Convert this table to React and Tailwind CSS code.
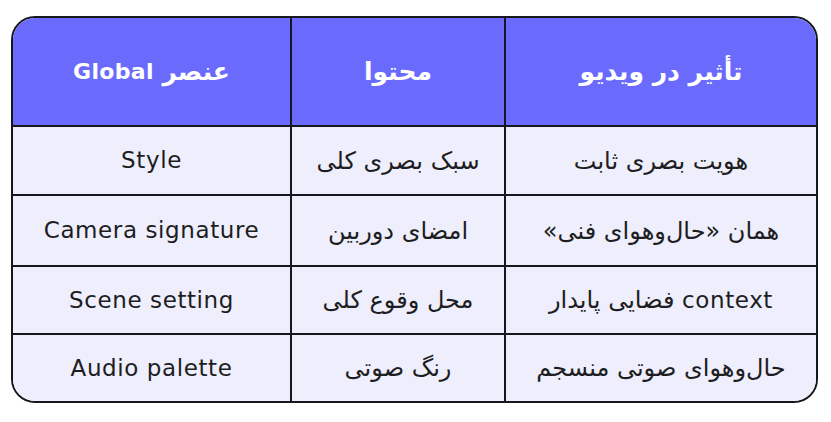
const font = "font-['DejaVu_Sans',sans-serif]";

const headers = ["عنصر Global", "محتوا", "تأثیر در ویدیو"];

const rows = [
  ["Style", "سبک بصری کلی", "هویت بصری ثابت"],
  ["Camera signature", "امضای دوربین", "همان «حال\u200cوهوای فنی»"],
  ["Scene setting", "محل وقوع کلی", "context فضایی پایدار"],
  ["Audio palette", "رنگ صوتی", "حال\u200cوهوای صوتی منسجم"],
];

const rowHeights = ["h-[69px]", "h-[71px]", "h-[68px]", "h-[66px]"];

// latin words get their own size and a little tracking, persian runs stay untouched
const Mixed = ({ text, header }) =>
  text.split(/([A-Za-z]+(?: [A-Za-z]+)*)/).map((part, i) =>
    /[A-Za-z]/.test(part) ? (
      <span
        key={i}
        dir="ltr"
        className={header ? "text-[22px] tracking-[0.3px]" : "text-[23px] tracking-[0.6px]"}
      >
        {part}
      </span>
    ) : (
      <span key={i}>{part}</span>
    )
  );

const Cell = ({ text, last, header, lastRow }) => (
  <div
    dir="rtl"
    className={`flex items-center justify-center whitespace-pre ${last ? "" : "border-r-2 border-[#16161d]"} ${
      lastRow ? "" : "border-b-2 border-[#16161d]"
    } ${
      header
        ? "bg-[#6a6bfd] text-white text-[25px] font-bold"
        : "bg-[#eeeefc] text-[#1d1d22] text-[24px]"
    }`}
  >
    <Mixed text={text} header={header} />
  </div>
);

export default function App() {
  return (
    <div className={`w-[831px] h-[422px] bg-white pt-[16px] pl-[11px] ${font}`}>
      <div className="w-[807px] rounded-[24px] border-2 border-[#16161d] overflow-hidden">
        <div className="grid grid-cols-[279px_214px_1fr] h-[109px]">
          {headers.map((h, i) => (
            <Cell key={h} text={h} header last={i === 2} />
          ))}
        </div>
        {rows.map((r, ri) => (
          <div key={ri} className={`grid grid-cols-[279px_214px_1fr] ${rowHeights[ri]}`}>
            {r.map((c, i) => (
              <Cell key={i} text={c} last={i === 2} lastRow={ri === rows.length - 1} />
            ))}
          </div>
        ))}
      </div>
    </div>
  );
}
